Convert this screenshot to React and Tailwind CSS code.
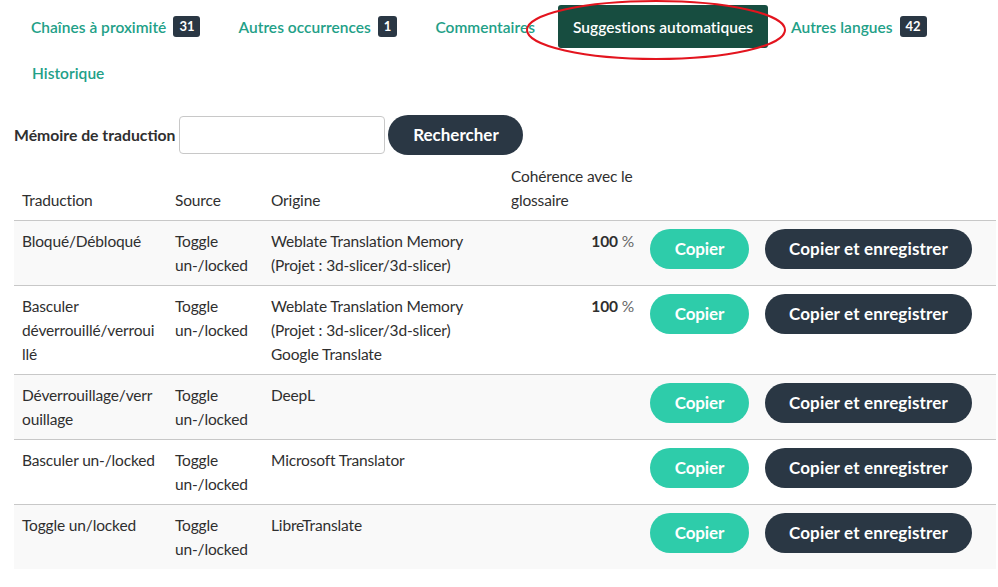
import React from "react";

const font = { fontFamily: "Lato, 'Noto Sans', sans-serif" };

function Badge({ children }) {
  return (
    <span className="ml-[7px] inline-flex h-[21px] items-center rounded-[3px] bg-[#2a3744] px-[6px] text-[13px] font-bold leading-none tracking-normal text-white">
      {children}
    </span>
  );
}

function Tab({ children, active, badge }) {
  return (
    <div
      className={
        "mr-[8px] flex h-[43px] items-center rounded-[3px] px-[15px] text-[15.5px] font-semibold tracking-[0.03px] " +
        (active ? "bg-[#174d40] text-white" : "text-[#22a087]")
      }
    >
      <span>{children}</span>
      {badge && <Badge>{badge}</Badge>}
    </div>
  );
}

function Btns() {
  return (
    <div className="flex gap-[16px]">
      <button className="h-[40px] w-[99px] rounded-full bg-[#2eccaa] text-[17px] font-bold text-white">
        Copier
      </button>
      <button className="h-[40px] w-[207px] rounded-full bg-[#2a3744] text-[17px] font-bold tracking-[0.15px] text-white">
        Copier et enregistrer
      </button>
    </div>
  );
}

const rows = [
  {
    t: ["Bloqué/Débloqué"],
    o: ["Weblate Translation Memory", "(Projet : 3d-slicer/3d-slicer)"],
    pct: true,
  },
  {
    t: ["Basculer", "déverrouillé/verroui", "llé"],
    o: [
      "Weblate Translation Memory",
      "(Projet : 3d-slicer/3d-slicer)",
      "Google Translate",
    ],
    pct: true,
  },
  { t: ["Déverrouillage/verr", "ouillage"], o: ["DeepL"] },
  { t: ["Basculer un-/locked"], o: ["Microsoft Translator"] },
  { t: ["Toggle un/locked"], o: ["LibreTranslate"] },
];

function Lines({ lines }) {
  return lines.map((l, i) => (
    <div key={i} className="whitespace-nowrap">
      {l}
    </div>
  ));
}

const cell = "px-[8px] py-[8px] text-[15.5px] tracking-[-0.15px]";

export default function App() {
  return (
    <div
      style={font}
      className="relative min-h-[587px] w-[998px] bg-white text-[16px] leading-[24px] text-[#2f2f2f]"
    >
      <svg
        className="pointer-events-none absolute left-0 top-0"
        width="998"
        height="70"
      >
        <ellipse
          cx="656"
          cy="30"
          rx="129"
          ry="29"
          fill="none"
          stroke="#e3141e"
          strokeWidth="2"
        />
      </svg>
      <div className="pl-[16px] pt-[5px]">
        <div className="flex">
          <Tab badge="31">Chaînes à proximité</Tab>
          <Tab badge="1">Autres occurrences</Tab>
          <Tab>Commentaires</Tab>
          <Tab active>Suggestions automatiques</Tab>
          <Tab badge="42">Autres langues</Tab>
        </div>
        <div className="mt-[3px] flex pl-[1px]">
          <Tab>Historique</Tab>
        </div>
      </div>

      <div className="mt-[21px] flex items-center pl-[14px]">
        <span className="text-[15.75px] font-bold">Mémoire de traduction</span>
        <input className="ml-[4px] h-[38px] w-[206px] rounded-[4px] border border-[#c8c8c8] bg-white" />
        <button className="ml-[3px] h-[40px] w-[135px] rounded-full bg-[#2a3744] text-[17px] font-bold text-white">
          Rechercher
        </button>
      </div>

      <div className="mt-[1px] pl-[14px] pr-[2px]">
        <table className="w-full table-fixed border-collapse">
          <colgroup>
            <col className="w-[153px]" />
            <col className="w-[96px]" />
            <col className="w-[240px]" />
            <col className="w-[139px]" />
            <col />
          </colgroup>
          <thead>
            <tr className="border-b border-[#c8c8c8] text-left align-bottom">
              <th className={cell + " font-normal"}>Traduction</th>
              <th className={cell + " font-normal"}>Source</th>
              <th className={cell + " font-normal"}>Origine</th>
              <th className={cell + " whitespace-nowrap font-normal"}>
                Cohérence avec le
                <br />
                glossaire
              </th>
              <th className={cell}></th>
            </tr>
          </thead>
          <tbody>
            {rows.map((r, i) => (
              <tr
                key={i}
                className={
                  "align-top " +
                  (i < rows.length - 1 ? "border-b border-[#c8c8c8] " : "") +
                  (i % 2 === 0 ? "bg-[#f9f9f9]" : "bg-white")
                }
              >
                <td className={cell}>
                  <Lines lines={r.t} />
                </td>
                <td className={cell}>
                  <Lines lines={["Toggle", "un-/locked"]} />
                </td>
                <td className={cell}>
                  <Lines lines={r.o} />
                </td>
                <td className={cell + " text-right"}>
                  {r.pct && (
                    <span>
                      <span className="font-bold">100</span>{" "}
                      <span className="text-[#666]">%</span>
                    </span>
                  )}
                </td>
                <td className={cell}>
                  <Btns />
                </td>
              </tr>
            ))}
          </tbody>
        </table>
      </div>
    </div>
  );
}
